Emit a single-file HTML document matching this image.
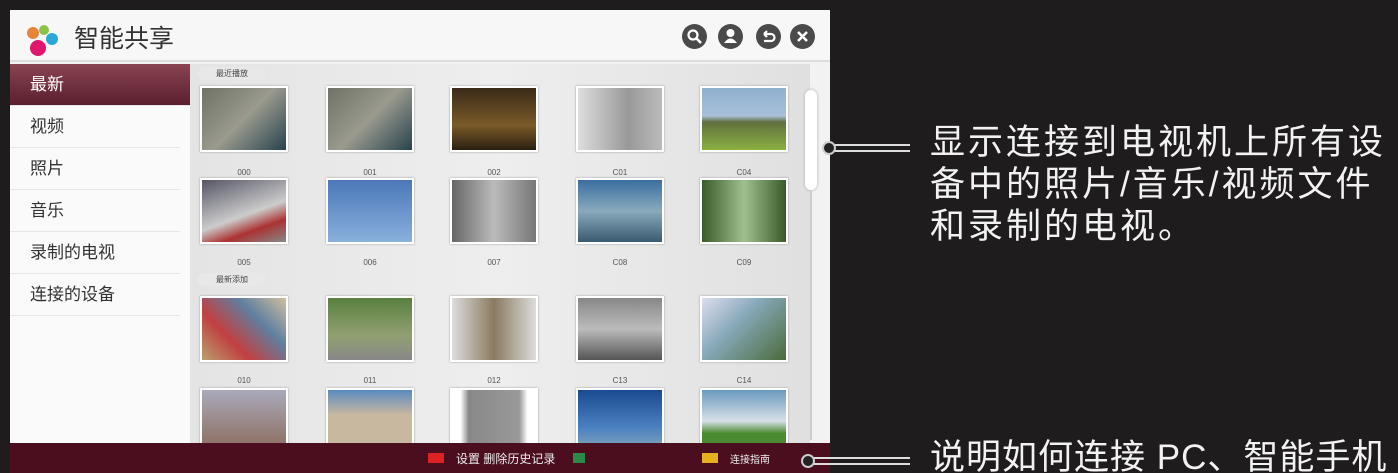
<!DOCTYPE html>
<html><head><meta charset="utf-8"><style>
*{margin:0;padding:0;box-sizing:border-box}
html,body{width:1398px;height:473px;overflow:hidden}
body{background:#1f1c1d;position:relative;font-family:"Liberation Sans","Noto Sans CJK SC",sans-serif}
.scr{position:absolute;left:10px;top:10px;width:820px;height:463px;background:#f2f2f2}
.hdr{position:absolute;left:0;top:0;width:820px;height:52px;background:#f7f7f7;border-bottom:2px solid #ddd}
.title{position:absolute;left:64px;top:9px;font-size:25px;color:#333}
.ic{position:absolute;top:14px;width:25px;height:25px;border-radius:50%;background:#4a4a4a}
.side{position:absolute;left:0;top:54px;width:180px;height:380px;background:#fafafa}
.side div{height:42px;line-height:42px;padding-left:20px;font-size:17px;color:#333;border-bottom:1px solid #e6e6e6;width:170px}
.side .sel{background:linear-gradient(#8a4452,#5a1f2e);color:#fff;width:180px}
.grid{position:absolute;left:180px;top:54px;width:620px;height:380px;background:linear-gradient(90deg,#e4e4e4,#eeeeee 50%,#e0e0e0)}
.th{position:absolute;width:88px;height:66px;border:2px solid #fff;box-shadow:0 0 2px #999}
.lb{position:absolute;font-size:8px;color:#555;width:88px;text-align:center}
.tag{position:absolute;font-size:8px;color:#444;background:#e8e8e8;border-radius:8px;padding:1px 18px}
.bar{position:absolute;left:0;top:433px;width:820px;height:30px;background:#4a0e1e}
.ann{position:absolute;left:930px;color:#f2f2f2;font-size:35px;letter-spacing:3px;line-height:42px;white-space:nowrap}
</style></head><body>
<div class="scr">
 <div class="hdr">
  <svg style="position:absolute;left:14px;top:14px" width="38" height="34"><circle cx="9" cy="9" r="6" fill="#e8843a"/><circle cx="20" cy="6" r="5" fill="#8bc34a"/><circle cx="28" cy="15" r="6" fill="#2aa8d8"/><circle cx="14" cy="24" r="8" fill="#e0156e"/></svg>
  <div class="title">智能共享</div>
  <div class="ic" style="left:672px"><svg width="25" height="25"><circle cx="11" cy="11" r="4.5" stroke="#fff" stroke-width="2.2" fill="none"/><path d="M14 14l5 5" stroke="#fff" stroke-width="2.5"/></svg></div>
  <div class="ic" style="left:708px"><svg width="25" height="25"><circle cx="12.5" cy="9" r="4" fill="#fff"/><path d="M6 19q6.5-9 13 0z" fill="#fff"/></svg></div>
  <div class="ic" style="left:746px"><svg width="25" height="25"><path d="M8 10h7a3.5 3.5 0 010 7h-7M8 10l3-3M8 10l3 3" stroke="#fff" stroke-width="2.2" fill="none"/></svg></div>
  <div class="ic" style="left:780px"><svg width="25" height="25"><path d="M8 8l9 9M17 8l-9 9" stroke="#fff" stroke-width="2.6"/></svg></div>
 </div>
 <div class="side"><div class="sel">最新</div><div>视频</div><div>照片</div><div>音乐</div><div>录制的电视</div><div>连接的设备</div></div>
 <div class="grid">
  <div class="tag" style="left:8px;top:3px">最近播放</div>
  <div class="tag" style="left:8px;top:209px">最新添加</div>
  <div class="th" style="left:10px;top:22px;background:linear-gradient(135deg,#6f7266,#9a9a8e 50%,#28424e)"></div>
  <div class="th" style="left:136px;top:22px;background:linear-gradient(135deg,#6f7266,#9a9a8e 50%,#28424e)"></div>
  <div class="th" style="left:260px;top:22px;background:linear-gradient(#3a2a18,#7a5a28 60%,#2a2010)"></div>
  <div class="th" style="left:386px;top:22px;background:linear-gradient(90deg,#ddd,#999 60%,#bbb)"></div>
  <div class="th" style="left:510px;top:22px;background:linear-gradient(#8fb0d0,#a8c0d8 45%,#607040 55%,#8ab040)"></div>
  <div class="th" style="left:10px;top:114px;background:linear-gradient(160deg,#556,#ccc 55%,#a33 75%,#888)"></div>
  <div class="th" style="left:136px;top:114px;background:linear-gradient(#4a78b8,#8ab0dc)"></div>
  <div class="th" style="left:260px;top:114px;background:linear-gradient(90deg,#666,#bbb 50%,#777)"></div>
  <div class="th" style="left:386px;top:114px;background:linear-gradient(#3b6ea0,#8ab 50%,#3a5a70)"></div>
  <div class="th" style="left:510px;top:114px;background:linear-gradient(90deg,#3a5a2a,#a0c090 50%,#3a5a2a)"></div>
  <div class="th" style="left:10px;top:232px;background:linear-gradient(45deg,#b8a070,#c04040,#6080a0,#d0c0a0)"></div>
  <div class="th" style="left:136px;top:232px;background:linear-gradient(#5a8040,#90a070 60%,#888)"></div>
  <div class="th" style="left:260px;top:232px;background:linear-gradient(90deg,#ddd,#8a7a60 50%,#ddd)"></div>
  <div class="th" style="left:386px;top:232px;background:linear-gradient(#888,#bbb 50%,#555)"></div>
  <div class="th" style="left:510px;top:232px;background:linear-gradient(135deg,#dde,#8ab 40%,#4a6a3a)"></div>
  <div class="th" style="left:10px;top:324px;background:linear-gradient(#aab,#8a6a5a)"></div>
  <div class="th" style="left:136px;top:324px;background:linear-gradient(#5a8ac0,#c8b8a0 40%)"></div>
  <div class="th" style="left:260px;top:324px;background:linear-gradient(90deg,#fff 10%,#888 20%,#999 80%,#fff 90%)"></div>
  <div class="th" style="left:386px;top:324px;background:linear-gradient(#1a4a90,#4a80c0 60%,#8ab)"></div>
  <div class="th" style="left:510px;top:324px;background:linear-gradient(#6a9ac0,#d8e0e8 50%,#4a8a30 70%)"></div>
  <div class="lb" style="left:10px;top:104px">000</div><div class="lb" style="left:136px;top:104px">001</div><div class="lb" style="left:260px;top:104px">002</div><div class="lb" style="left:386px;top:104px">C01</div><div class="lb" style="left:510px;top:104px">C04</div>
  <div class="lb" style="left:10px;top:194px">005</div><div class="lb" style="left:136px;top:194px">006</div><div class="lb" style="left:260px;top:194px">007</div><div class="lb" style="left:386px;top:194px">C08</div><div class="lb" style="left:510px;top:194px">C09</div>
  <div class="lb" style="left:10px;top:312px">010</div><div class="lb" style="left:136px;top:312px">011</div><div class="lb" style="left:260px;top:312px">012</div><div class="lb" style="left:386px;top:312px">C13</div><div class="lb" style="left:510px;top:312px">C14</div>
 </div>
 <div style="position:absolute;left:795px;top:80px;width:12px;height:100px;background:#fff;border-radius:6px;box-shadow:0 0 3px #aaa"></div>
 <div style="position:absolute;left:800px;top:180px;width:2px;height:250px;background:#ccc"></div>
 <div class="bar">
  <div style="position:absolute;left:418px;top:10px;width:16px;height:10px;background:#d22"></div>
  <div style="position:absolute;left:446px;top:7px;font-size:12px;color:#eee">设置 删除历史记录</div>
  <div style="position:absolute;left:563px;top:10px;width:12px;height:10px;background:#2a8a4a"></div>
  <div style="position:absolute;left:692px;top:10px;width:16px;height:10px;background:#e8b020"></div>
  <div style="position:absolute;left:720px;top:8px;font-size:10px;color:#eee">连接指南</div>
 </div>
</div>
<svg style="position:absolute;left:0;top:0" width="1398" height="473">
 <circle cx="829" cy="148" r="6" fill="#222" stroke="#ccc" stroke-width="2"/>
 <path d="M835 145h75M835 151h75" stroke="#ddd" stroke-width="2"/>
 <circle cx="808" cy="461" r="6" fill="#222" stroke="#ccc" stroke-width="2"/>
 <path d="M814 458h96M814 464h96" stroke="#ddd" stroke-width="2"/>
</svg>
<div class="ann" style="top:122px">显示连接到电视机上所有设<br>备中的照片/音乐/视频文件<br>和录制的电视。</div>
<div class="ann" style="top:437px;letter-spacing:1px">说明如何连接 PC、智能手机</div>
</body></html>
